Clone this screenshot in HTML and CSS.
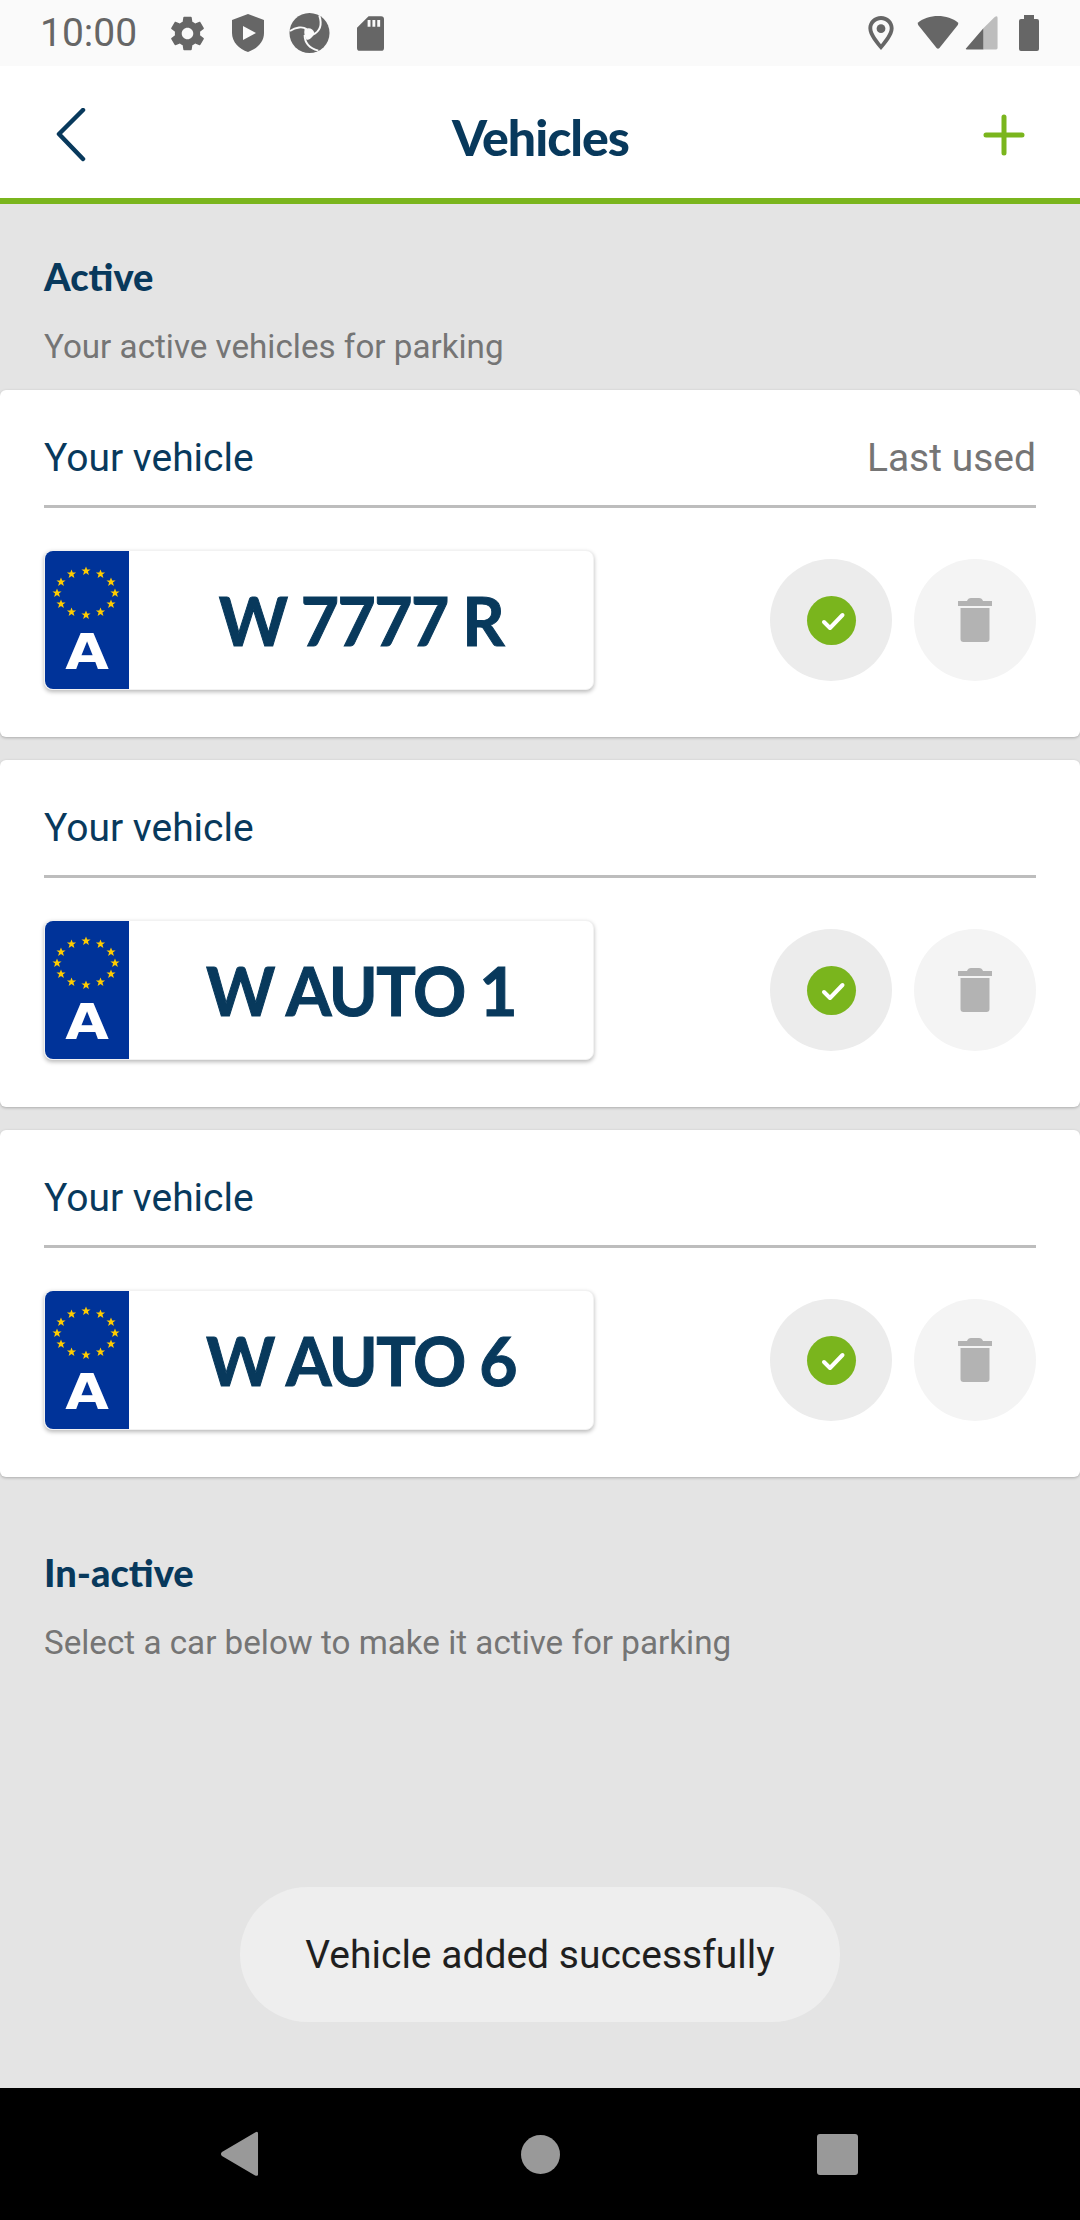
FILE: index.html
```html
<!DOCTYPE html>
<html lang="en">
<head>
    <meta charset="UTF-8">
    <meta name="viewport" content="width=device-width, initial-scale=1.0">
    <title>Vehicles</title>
    <link rel="stylesheet" href="styles.css">
</head>
<body>
    <svg class="defs" width="0" height="0">
        <defs>
            <polygon id="star" points="0,-4.6 1.2,-1.5 4.6,-1.4 1.9,0.6 2.9,3.9 0,2 -2.9,3.9 -1.9,0.6 -4.6,-1.4 -1.2,-1.5"/>
            <g id="stars" fill="#ffcc00">
                <use href="#star" x="41" y="20"/>
                <use href="#star" x="55.5" y="23"/>
                <use href="#star" x="66" y="31"/>
                <use href="#star" x="70" y="42"/>
                <use href="#star" x="66" y="53"/>
                <use href="#star" x="55.5" y="61"/>
                <use href="#star" x="41" y="64"/>
                <use href="#star" x="26.5" y="61"/>
                <use href="#star" x="16" y="53"/>
                <use href="#star" x="12" y="42"/>
                <use href="#star" x="16" y="31"/>
                <use href="#star" x="26.5" y="23"/>
            </g>
            <g id="trash" fill="#b3b3b3">
                <path d="M0 3h9q1-3 4-3h8q3 0 4 3h9v5H0z"/>
                <path d="M2.500 10h29v31q0 3-3 3h-23q-3 0-3-3z"/>
            </g>
        </defs>
    </svg>

    <div class="statusbar">
        <div class="status-left">
            <span class="clock">10:00</span>
            <!-- gear -->
            <svg class="ic-gear" width="33" height="35" viewBox="1.800 1.800 20 20.400"><path fill="#666" d="M19.4 13c.04-.32.06-.66.06-1s-.02-.68-.07-1l2.16-1.68c.2-.15.25-.42.13-.64l-2.05-3.55c-.12-.22-.39-.3-.61-.22l-2.55 1.03c-.53-.4-1.1-.74-1.73-1l-.38-2.71C14.32 2.01 14.1 1.8 13.85 1.8h-4.1c-.25 0-.47.2-.5.43l-.38 2.71c-.62.26-1.2.6-1.73 1L4.6 4.9c-.23-.09-.49 0-.61.22L1.94 8.68c-.13.22-.07.49.12.64L4.22 11c-.05.32-.07.67-.07 1s.02.68.07 1l-2.16 1.68c-.19.15-.25.42-.12.64l2.05 3.55c.12.22.38.3.61.22l2.55-1.03c.53.4 1.1.74 1.73 1l.38 2.71c.03.24.25.43.5.43h4.1c.25 0 .47-.19.5-.43l.38-2.71c.62-.26 1.2-.6 1.73-1l2.55 1.03c.22.09.49 0 .61-.22l2.05-3.55c.12-.22.07-.49-.13-.64zM11.8 15.5c-1.93 0-3.5-1.57-3.5-3.5s1.57-3.5 3.5-3.5 3.5 1.57 3.5 3.5-1.57 3.5-3.5 3.5z"/></svg>
            <!-- shield -->
            <svg class="ic-shield" width="32" height="38" viewBox="0 0 32 38"><path fill="#666" fill-rule="evenodd" d="M16 0l16 6v13c0 9-7 16-16 19C7 35 0 28 0 19V6zM11 12v14l13-7z"/></svg>
            <!-- round logo -->
            <svg class="ic-logo" width="41" height="42" viewBox="0 0 42 42">
                <circle cx="21" cy="21" r="20.5" fill="#666"/>
                <path fill="none" stroke="#fafafa" stroke-width="2" d="M1 19c6-4 13-5 17-2M31 3c3 9 2 16-7 20M16 23c0 6 3 13 14 16"/>
                <path fill="#fafafa" d="M16 17c4-2 9-1 10 4-2 5-5 7-8 7-2-3-3-7-2-11z"/>
            </svg>
            <!-- sd card -->
            <svg class="ic-sd" width="27" height="35" viewBox="0 0 28 36"><path fill="#666" fill-rule="evenodd" d="M12 0h13q3 0 3 3v30q0 3-3 3H3q-3 0-3-3V12zM11 4v7h3V4zM16 4v7h3V4zM21 4v7h3V4z"/></svg>
        </div>
        <div class="status-right">
            <svg width="26" height="35" viewBox="0 0 26 36"><path fill="#666" fill-rule="evenodd" d="M13 0C6 0 0 5.500 0 12.500 0 20 8 29 13 35c5-6 13-15 13-22.500C26 5.500 20 0 13 0zm0 4c5 0 9 3.800 9 8.500 0 5-5.500 12-9 16.500-3.500-4.500-9-11.500-9-16.500C4 7.800 8 4 13 4z"/><circle cx="13" cy="13" r="4.500" fill="#666"/></svg>
            <svg class="wifi" width="42" height="34" viewBox="0 0 44 36"><path fill="#666" d="M22 0c8 0 16 2.500 21 7q1 1 0 2.500L23.500 34q-1.500 1.500-3 0L1 9.500Q0 8 1 7c5-4.500 13-7 21-7z"/></svg>
            <svg class="signal" width="33" height="34" viewBox="0 0 34 36"><path fill="#bdbdbd" d="M31 1q3-2 3 1v32q0 1.500-1.500 1.500H19V13z"/><path fill="#666" d="M19 13v22.500H1.500Q-.500 35.500 1 34z"/></svg>
            <svg class="battery" width="20" height="36" viewBox="0 0 20 36"><path fill="#666" d="M5 0h10v4h3q2 0 2 2v28q0 2-2 2H2q-2 0-2-2V6q0-2 2-2h3z"/></svg>
        </div>
    </div>

    <header class="topbar">
        <svg class="back" width="30" height="54" viewBox="0 0 30 54"><path fill="none" stroke="#08395c" stroke-width="4.500" stroke-linecap="round" stroke-linejoin="round" d="M27 2L3 26l24 25"/></svg>
        <h1>Vehicles</h1>
        <svg class="plus" width="42" height="42" viewBox="0 0 42 42"><path fill="none" stroke="#7ab51d" stroke-width="5" stroke-linecap="round" d="M21 3v36M3 21h36"/></svg>
    </header>

    <main>
        <section class="intro">
            <h2>Active</h2>
            <p>Your active vehicles for parking</p>
        </section>

        <div class="card">
            <div class="card-head">
                <span class="card-title">Your vehicle</span>
                <span class="card-note">Last used</span>
            </div>
            <div class="card-body">
                <div class="plate">
                    <div class="plate-eu">
                        <svg width="84" height="77" viewBox="0 0 84 77"><use href="#stars"/></svg>
                        <span class="plate-country">A</span>
                    </div>
                    <span class="plate-number">W 7777 R</span>
                </div>
                <div class="actions">
                    <button class="round round-check"><span class="tick"><svg width="49" height="49" viewBox="0 0 49 49"><path fill="none" stroke="#fff" stroke-width="4" stroke-linecap="round" stroke-linejoin="round" d="M17 26l6 6 12.500-13"/></svg></span></button>
                    <button class="round round-trash"><svg width="34" height="44" viewBox="0 0 34 44"><use href="#trash"/></svg></button>
                </div>
            </div>
        </div>

        <div class="card">
            <div class="card-head">
                <span class="card-title">Your vehicle</span>
            </div>
            <div class="card-body">
                <div class="plate">
                    <div class="plate-eu">
                        <svg width="84" height="77" viewBox="0 0 84 77"><use href="#stars"/></svg>
                        <span class="plate-country">A</span>
                    </div>
                    <span class="plate-number">W AUTO 1</span>
                </div>
                <div class="actions">
                    <button class="round round-check"><span class="tick"><svg width="49" height="49" viewBox="0 0 49 49"><path fill="none" stroke="#fff" stroke-width="4" stroke-linecap="round" stroke-linejoin="round" d="M17 26l6 6 12.500-13"/></svg></span></button>
                    <button class="round round-trash"><svg width="34" height="44" viewBox="0 0 34 44"><use href="#trash"/></svg></button>
                </div>
            </div>
        </div>

        <div class="card">
            <div class="card-head">
                <span class="card-title">Your vehicle</span>
            </div>
            <div class="card-body">
                <div class="plate">
                    <div class="plate-eu">
                        <svg width="84" height="77" viewBox="0 0 84 77"><use href="#stars"/></svg>
                        <span class="plate-country">A</span>
                    </div>
                    <span class="plate-number">W AUTO 6</span>
                </div>
                <div class="actions">
                    <button class="round round-check"><span class="tick"><svg width="49" height="49" viewBox="0 0 49 49"><path fill="none" stroke="#fff" stroke-width="4" stroke-linecap="round" stroke-linejoin="round" d="M17 26l6 6 12.500-13"/></svg></span></button>
                    <button class="round round-trash"><svg width="34" height="44" viewBox="0 0 34 44"><use href="#trash"/></svg></button>
                </div>
            </div>
        </div>

        <section class="intro">
            <h2>In-active</h2>
            <p>Select a car below to make it active for parking</p>
        </section>
    </main>

    <div class="toast">Vehicle added successfully</div>

    <nav class="navbar">
        <svg class="nav-back" width="39" height="46" viewBox="0 0 40 46"><path fill="#999" d="M36 1q3-2 3 1v42q0 2-3 1L2 25q-2-2 0-4z"/></svg>
        <svg class="nav-home" width="39" height="39" viewBox="0 0 39 39"><circle cx="19.500" cy="19.500" r="19.500" fill="#999"/></svg>
        <svg width="41" height="41" viewBox="0 0 41 41"><rect width="41" height="41" rx="3" fill="#999"/></svg>
    </nav>
</body>
</html>
```

FILE: styles.css
```css
* {
    box-sizing: border-box;
}

html, body {
    margin: 0;
    height: 2220px;
}

body {
    display: flex;
    flex-direction: column;
    position: relative;
    overflow: hidden;
    background-color: #e4e4e4;
    font-family: Roboto, sans-serif;
    color: #08395c;
}

.defs {
    position: absolute;
}

.statusbar {
    height: 66px;
    flex: none;
    display: flex;
    justify-content: space-between;
    align-items: center;
    padding: 0 41px 0 40px;
    background-color: #fafafa;
}

.status-left, .status-right {
    display: flex;
    align-items: center;
}

.clock {
    font-size: 39px;
    color: #666666;
    margin-right: 34px;
}

.ic-gear {
    margin-right: 28px;
}

.ic-shield {
    margin-right: 25px;
}

.ic-logo {
    margin-right: 27px;
}

.wifi {
    margin-left: 23px;
}

.signal {
    margin-left: 6px;
}

.battery {
    margin-left: 21px;
}

.topbar {
    height: 138px;
    flex: none;
    display: grid;
    grid-template-columns: 1fr auto 1fr;
    align-items: center;
    padding: 6px 55px 0 56px;
    background-color: #ffffff;
    border-bottom: 6px solid #7ab51d;
}

.topbar h1 {
    margin: 4px 0 0;
    font-family: Lato, sans-serif;
    font-size: 50px;
    font-weight: 900;
    letter-spacing: -1px;
}

.plus {
    justify-self: end;
}

main {
    flex: 1;
    display: flex;
    flex-direction: column;
}

.intro {
    padding: 52px 44px 0;
    height: 186px;
}

.intro h2 {
    margin: 0;
    font-family: Lato, sans-serif;
    font-size: 38px;
    line-height: 40px;
    font-weight: 900;
}

.intro p {
    margin: 31px 0 0;
    font-size: 33.2px;
    line-height: 40px;
    color: #757575;
}

.card {
    height: 347px;
    margin-bottom: 23px;
    padding: 0 44px;
    background-color: #ffffff;
    border-radius: 6px;
    box-shadow: 0 1px 3px rgba(0, 0, 0, 0.25);
}

.card-head {
    height: 118px;
    display: flex;
    justify-content: space-between;
    align-items: center;
    padding-top: 20px;
    border-bottom: 3px solid #bdbdbd;
    font-size: 39px;
}

.card-note {
    color: #757575;
}

.card-body {
    display: flex;
    justify-content: space-between;
    align-items: center;
    padding-top: 42px;
}

.plate {
    width: 550px;
    height: 140px;
    display: flex;
    align-items: center;
    background-color: #ffffff;
    border: 1px solid #f2f2f2;
    border-radius: 8px;
    box-shadow: 0 2px 4px rgba(0, 0, 0, 0.28);
}

.plate-eu {
    width: 84px;
    height: 138px;
    flex: none;
    display: flex;
    flex-direction: column;
    align-items: center;
    background-color: #003399;
    border-radius: 8px 0 0 8px;
}

.plate-country {
    font-family: "DejaVu Sans", sans-serif;
    font-weight: 700;
    font-size: 49px;
    line-height: 50px;
    color: #ffffff;
    transform: scaleX(1.15);
}

.plate-number {
    flex: 1;
    text-align: center;
    font-family: Lato, sans-serif;
    font-weight: 700;
    font-size: 66px;
    letter-spacing: -1.5px;
    -webkit-text-stroke: 1px #08395c;
    white-space: nowrap;
}

.actions {
    display: flex;
    gap: 22px;
}

.round {
    width: 122px;
    height: 122px;
    padding: 0;
    border: none;
    border-radius: 50%;
    display: flex;
    justify-content: center;
    align-items: center;
}

.round-check {
    background-color: #ececec;
}

.round-trash {
    background-color: #f4f4f4;
}

.tick {
    width: 49px;
    height: 49px;
    border-radius: 50%;
    background-color: #7ab51d;
    display: block;
}

.toast {
    position: absolute;
    left: 240px;
    top: 1887px;
    width: 600px;
    height: 135px;
    display: flex;
    justify-content: center;
    align-items: center;
    background-color: #eeeeee;
    border-radius: 68px;
    font-size: 39px;
    color: #1f1f1f;
}

.navbar {
    height: 132px;
    flex: none;
    display: flex;
    align-items: center;
    padding: 0 0 0 220px;
    background-color: #000000;
}

.nav-back {
    margin-right: 262px;
}

.nav-home {
    margin-right: 257px;
}
```
